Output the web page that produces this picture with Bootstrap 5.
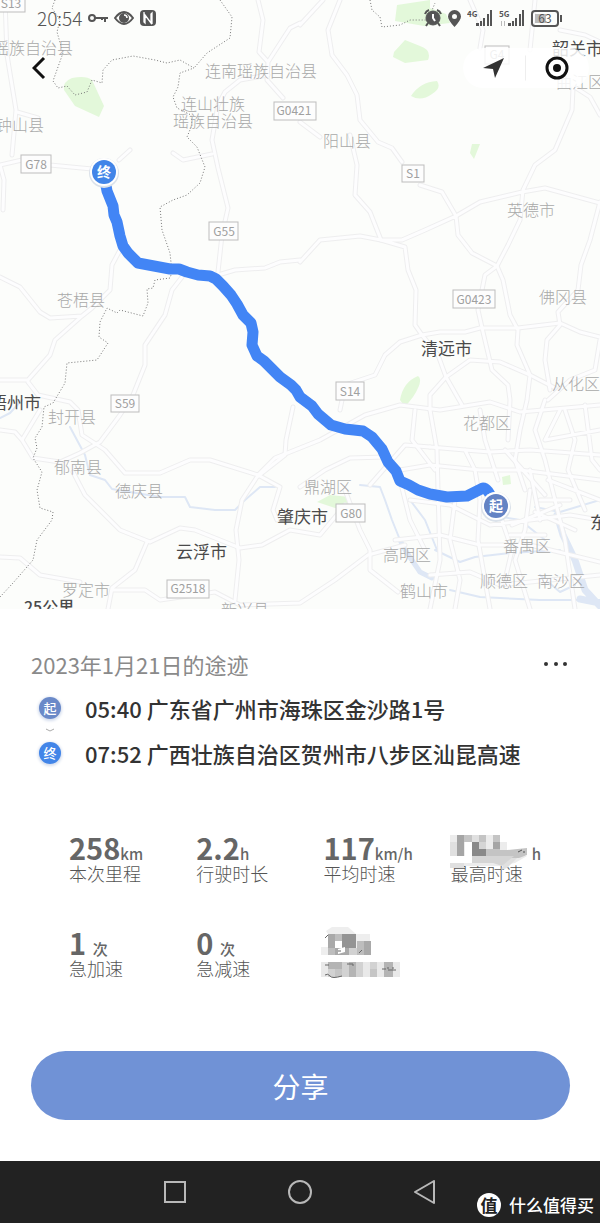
<!DOCTYPE html>
<html lang="zh-CN">
<head>
<meta charset="utf-8">
<meta name="viewport" content="width=device-width, initial-scale=1">
<title>途迹</title>
<link href="https://cdn.jsdelivr.net/npm/bootstrap@5.3.0/dist/css/bootstrap.min.css" rel="stylesheet">
<style>
  body { font-family: "Noto Sans CJK SC", "Noto Sans", sans-serif; color: #333; background: #fff; }
  svg { display: block; flex-shrink: 0; }
  .map-art { width: 100%; height: auto; background: #fcfdfb; }
  .minor { font-size: 16px; font-weight: 300; fill: #a9a9a9; }
  .major { font-size: 17px; font-weight: 400; fill: #4a4a4a; }
  .scale-label { font-size: 16px; font-weight: 500; }
  .shield rect { fill: #fdfdfd; stroke: #bdbdbd; }
  .shield text { font-size: 12px; fill: #a0a0a0; text-anchor: middle; }
  .pin-text { font-size: 14px; font-weight: 700; fill: #fff; text-anchor: middle; }
  .status-bar { padding: 5px 38px 0 37px; color: #555; }
  .status-icons { gap: 6px; }
  .clock { font-size: 19px; line-height: 26px; font-weight: 300; }
  .back-btn { margin: 10px 0 0 23px; }
  .capsule { margin: 17px 11px 0 0; width: 126px; height: 40px; background: rgba(255,255,255,.85); }
  .capsule .btn + .btn { border-left: 1px solid #eee; }
  .sheet { padding: 39px 30px 41px 31px; }
  .trip-title { font-size: 22px; line-height: 32px; color: #8a8a8a; }
  .place { font-size: 22px; line-height: 32px; font-weight: 500; }
  .dot { width: 22px; height: 22px; font-size: 13px; line-height: 22px; font-weight: 500; color: #fff; box-shadow: 0 1px 3px 1px #d3dced; }
  .dot-start { background: #6a89c8; }
  .dot-end { background: #4285e8; }
  .places { padding: 12px 0 0 8px; }
  .stats { padding: 65px 0 0 38px; margin-right: -8px; }
  .stats-grid { row-gap: 45px; }
  .figure-line { height: 28px; font-size: 29px; line-height: 26px; font-weight: 700; color: #666; }
  .unit { font-size: 15px; line-height: 15px; font-weight: 500; }
  .caption-text { font-size: 18px; line-height: 22px; font-weight: 300; color: #555; }
  .hidden-part { padding-left: 81px; }
  .mosaic { left: -10px; top: -4px; }
  .share-btn { height: 69px; margin-top: 72px; padding: 0; font-size: 28px; line-height: 32px; background: #7092d6; color: #fff; }
  .share-btn:hover { background: #6386cc; color: #fff; }
  .nav-keys { height: 62px; background: #222; }
  .nav-keys .btn { width: 125px; }
  .watermark { right: 6px; bottom: 4px; font-size: 17px; line-height: 28px; font-weight: 500; color: #fff; }
  .seal { width: 24px; height: 24px; line-height: 24px; background: #fff; color: #222; font-weight: 700; }
</style>
</head>
<body>
<header class="position-relative">
  <svg class="map-art" viewBox="0 0 600 609" role="img" aria-label="行程地图">
    <defs>
      <g id="roads" fill="none" stroke-linejoin="round" stroke-linecap="round">
        <path d="M5 0L7 55L16 110L12 155M17 112L38 118M0 165L22 160L50 165L92 169M119 160L130 150M0 165L4 180L3 210"/>
        <path d="M258 0L263 20L259 52L268 62L267 80L283 98M300 23L290 28L268 62M268 75L240 80L225 92L218 105L212 140L218 168L228 208L222 235L218 272M173 153L183 160L212 154"/>
        <path d="M340 0L328 30L332 55L347 75L357 95L360 120L378 142L392 148L402 162M323 0L300 25M300 122L320 137M350 135L357 165L355 195L370 212L381 240M420 185L442 192L456 216M470 0L483 30L480 48M535 0L530 50M560 30L585 35L600 42"/>
        <path d="M573 88L572 110L555 150L535 165L523 190L520 220L508 245L497 266M456 216L480 202L522 192L545 188L600 203M576 88L590 97L600 115"/>
        <path d="M300 262L320 240L360 236L381 240L402 240L425 230L456 216M381 240L405 247L408 270L416 290L415 325L422 335M456 216L458 235L472 253L497 266L503 280L510 315L518 330L517 345L530 375L527 400L520 430L515 460L525 490"/>
        <path d="M497 266L485 275L478 310L483 332L492 370L508 385L510 400L508 440M600 202L590 240L581 265L578 290L558 312L560 325L547 340L545 360L550 390"/>
        <path d="M340 410L345 385L375 375L385 355L400 342L422 335L440 332L465 332L480 328L518 328L560 323L580 332L600 337M422 335L438 355L446 377L462 405M446 377L430 395L430 410M446 377L470 360L500 362L530 375L555 388M600 340L595 370L570 380L548 400"/>
        <path d="M0 277L20 287L40 312L50 318L82 316L92 308L110 290L112 265L120 250M82 316L55 340L50 355L28 380L0 380M28 382L38 395L70 402L78 410L82 435L105 450L125 473L160 473L190 460L210 460L258 475L275 458L320 440L365 415L400 405L440 410L490 402L520 412L600 405"/>
        <path d="M182 277L172 290L165 315L145 345L145 365L133 395L120 415L100 442L80 453L60 462L33 458L22 440L15 432L0 430M22 440L40 410M218 275L235 270L265 268L280 262L300 260"/>
        <path d="M73 472L85 495L120 530L150 542L180 528L195 530L240 548L262 545L290 530L320 535L345 505M147 542L135 570L112 588L108 609M112 590L145 590L160 600L215 592L240 605L300 603L335 580L368 555L405 545M0 557L20 558L40 575L80 582"/>
        <path d="M293 407L286 440L285 455L257 477L242 500L236 530L239 560L235 600M258 475L280 487L273 510L277 520M300 487L325 470L350 458L385 457M400 470L430 465L480 470L520 470L560 475L600 480M345 490L360 530L370 550L370 570L398 592"/>
        <path d="M430 410L437 450L438 490L440 560L430 609M430 447L465 450L490 452L530 450L600 455M465 450L475 470L480 500L478 540L490 609M480 410L485 440L498 480M545 400L535 430L545 460L555 500L565 540L575 609"/>
        <path d="M395 540L440 535L480 545L530 545L600 562M410 500L450 505L490 525L530 520L570 515L600 520M530 490L525 530L515 560L530 609M565 410L575 440L568 470L585 510M500 515L512 550L505 580M585 405L592 460L600 470M430 575L470 572L500 585L550 580L600 575M455 500L450 540L460 580L455 609M415 410L412 440L435 470M548 480L600 500M505 450L545 495M560 410L545 440L600 430"/>
        <path d="M540 500L570 500M535 512L575 530M510 535L545 535M512 525L560 505M530 470L540 520M400 480L410 520L425 550M370 485L405 445L430 447"/>
      </g>
    </defs>
    <g fill="#e3f8da">
      <path d="M64 90Q62 82 72 78Q86 75 92 80L104 106L99 117L75 106Z"/>
      <path d="M397 5L430 0L430 8L446 14L450 23L424 26L395 21ZM394 52L405 40L420 46Q432 50 428 60L405 63L393 57ZM411 96Q420 82 437 81Q442 88 432 94Q421 102 411 96ZM472 144L480 144L474 159L470 153ZM400 400Q403 382 418 376Q424 380 413 397L405 407ZM317 502L330 495L350 497L350 507L335 508ZM502 477L510 475L511 484L503 485Z"/>
    </g>
    <g fill="none" stroke="#dee7f5" stroke-linejoin="round" stroke-linecap="round">
      <path stroke-width="2" d="M0 418L10 413L22 400M70 427L85 455L90 475L105 480L112 489L160 497L185 497L190 507L215 510L235 510L245 500L260 487L275 487M360 485L380 487L385 500L392 520L400 540M435 550L460 562L475 557L510 553L560 550M535 507L560 512L600 500M450 590L480 597L540 600L600 600M410 500L425 520L437 550M540 575L560 592L575 585M490 515L520 520L545 540"/>
      <path stroke-width="5" d="M400 540L405 550L420 572L432 578"/>
      <path stroke-width="7" d="M557 515L563 535L575 560L585 590L600 606M580 599L600 603"/>
    </g>
    <use href="#roads" stroke="#eeeeef" stroke-width="5"/>
    <use href="#roads" stroke="#fdfdfe" stroke-width="3"/>
    <g fill="none" stroke="#777" stroke-dasharray="1 2" stroke-linejoin="round">
      <path d="M55 0L52 8L60 20L57 32L63 53L53 81L58 88L67 86L75 95L87 92L92 80L102 83L103 70L112 60L133 56L155 60L167 63L180 60L194 68L180 73L178 87L173 97L177 108L191 115L192 125L187 137L197 147L205 167L200 183L187 195L173 200L160 207L162 230L170 253L172 272L170 278L155 280L153 288L147 289L148 303L143 316L120 310L117 313L107 308L100 322L99 337L108 343L97 360L67 363L65 383L53 403L44 407L42 427L35 438L37 448L33 458L42 472L37 490L40 508L53 512L52 520L37 540L33 560L13 583L0 597"/>
      <path d="M220 0L232 17L230 38L207 53L194 68M370 0L372 10L380 17L382 27L400 25L410 20L428 20L435 3"/>
    </g>
    <path d="M104 175L107 191L113 206L114 215L117 222L120 236L123 246L128 253L138 263L154 266L170 269L179 269L187 272L198 275L210 276L216 279L223 286L231 295L237 304L243 315L251 323L253 332L252 345L257 356L264 361L270 367L280 377L291 385L296 390L300 397L312 406L318 414L331 425L345 429L363 431L372 437L382 449L388 462L396 471L400 481L409 485L418 490L430 494L447 497L467 496L483 488Q489 488 494 505" fill="none" stroke="#4285f5" stroke-width="11" stroke-linejoin="round"/>
    <g class="minor">
      <text x="-7" y="54">瑶族自治县</text><text x="-4" y="131">钟山县</text>
      <text x="205" y="77">连南瑶族自治县</text><text x="181" y="110">连山壮族</text><text x="173" y="127">瑶族自治县</text>
      <text x="323" y="147">阳山县</text><text x="556" y="88">曲江区</text><text x="507" y="216">英德市</text>
      <text x="57" y="306">苍梧县</text><text x="539" y="303">佛冈县</text><text x="552" y="390">从化区</text>
      <text x="48" y="423">封开县</text><text x="463" y="429">花都区</text><text x="54" y="473">郁南县</text>
      <text x="115" y="497">德庆县</text><text x="304" y="493">鼎湖区</text><text x="503" y="552">番禺区</text>
      <text x="383" y="561">高明区</text><text x="400" y="597">鹤山市</text><text x="480" y="587">顺德区</text>
      <text x="537" y="587">南沙区</text><text x="62" y="596">罗定市</text><text x="221" y="616">新兴县</text>
    </g>
    <g class="major">
      <text x="552" y="55">韶关市</text><text x="421" y="355">清远市</text><text x="-10" y="409">梧州市</text>
      <text x="277" y="523">肇庆市</text><text x="176" y="558">云浮市</text><text x="590" y="529">东莞市</text>
      <text class="scale-label" x="24" y="613">25公里</text>
    </g>
    <g class="shield">
      <rect x="-5" y="-7" width="30" height="19"/><text x="11" y="8">S13</text>
      <rect x="21" y="155" width="30" height="18"/><text x="36" y="169">G78</text>
      <rect x="274" y="102" width="42" height="18"/><text x="294" y="115">G0421</text>
      <rect x="402" y="165" width="22" height="17"/><text x="413" y="178">S1</text>
      <rect x="485" y="46" width="24" height="18"/><text x="497" y="59">G4</text>
      <rect x="209" y="222" width="29" height="18"/><text x="224" y="236">G55</text>
      <rect x="453" y="290" width="42" height="18"/><text x="474" y="304">G0423</text>
      <rect x="336" y="382" width="28" height="18"/><text x="350" y="396">S14</text>
      <rect x="111" y="395" width="28" height="17"/><text x="125" y="408">S59</text>
      <rect x="336" y="504" width="29" height="18"/><text x="351" y="518">G80</text>
      <rect x="167" y="580" width="42" height="18"/><text x="188" y="593">G2518</text>
    </g>
    <circle cx="104" cy="173" r="15" fill="#dbe2ea"/><circle cx="104" cy="172" r="14" fill="#fff"/><circle cx="104" cy="172" r="12" fill="#4285e8"/>
    <text class="pin-text" x="104" y="177">终</text>
    <circle cx="496" cy="507" r="15" fill="#dbe2ea"/><circle cx="496" cy="506" r="14" fill="#fff"/><circle cx="496" cy="506" r="12" fill="#6483c4"/>
    <text class="pin-text" x="496" y="511">起</text>
  </svg>

  <div class="position-absolute top-0 start-0 w-100">
    <div class="status-bar d-flex align-items-center justify-content-between">
      <div class="d-flex align-items-center status-icons">
        <span class="clock">20:54</span>
        <svg width="20" height="16" viewBox="0 0 20 16" fill="none" stroke="#555" stroke-width="2"><circle cx="4" cy="8" r="3"/><path d="M7 8H20M17 8V12M14 8V10"/></svg>
        <svg width="20" height="16" viewBox="0 0 20 16"><path d="M1 8Q10 -4 19 8Q10 20 1 8Z" fill="none" stroke="#555" stroke-width="2"/><circle cx="10" cy="8" r="5" fill="#555"/><path d="M10 5A3 3 0 0 1 13 8" fill="none" stroke="#fff" stroke-width="1.5"/></svg>
        <svg width="16" height="16" viewBox="0 0 16 16"><rect width="16" height="16" rx="4" fill="#555"/><path d="M4 2V12L5 13V5L11 13V4L12 3V14" fill="none" stroke="#fff" stroke-width="1.3"/></svg>
      </div>
      <div class="d-flex align-items-center status-icons">
        <svg width="18" height="18" viewBox="0 0 18 18" fill="none" stroke="#555"><circle cx="9" cy="9" r="7" fill="#555"/><path d="M1 5Q2 2 5 1M13 1Q16 2 17 5M4 14L2 17M14 14L16 17" stroke-width="2"/><path d="M9 5V9L11 12" stroke="#fff" stroke-width="2"/></svg>
        <svg width="13" height="17" viewBox="0 0 13 17"><path fill="#555" fill-rule="evenodd" d="M6.500 0A6.500 6.500 0 0 0 0 6.500Q0 10 6.500 17Q13 10 13 6.500A6.500 6.500 0 0 0 6.500 0ZM6.500 4A2.500 2.500 0 1 1 6.500 9A2.500 2.500 0 1 1 6.500 4Z"/></svg>
        <svg width="26" height="18" viewBox="0 0 26 18" fill="#555"><text x="0" y="8" font-size="8" font-weight="700">4G</text><path d="M9 14h3v3h-3zM13 12h2v5h-2zM16 9h2v8h-2zM20 5h2v12h-2zM23 1h2v16h-2z"/></svg>
        <svg width="26" height="18" viewBox="0 0 26 18" fill="#555"><text x="0" y="8" font-size="8" font-weight="700">5G</text><path fill="#bbb" d="M2 12h1v5h-1zM5 12h1v5h-1z"/><path d="M9 14h3v3h-3zM13 12h2v5h-2zM16 9h2v8h-2zM20 5h2v12h-2zM23 1h2v16h-2z"/></svg>
        <svg width="31" height="17" viewBox="0 0 31 17"><rect x="1" y="1" width="26" height="15" rx="3" fill="none" stroke="#555" stroke-width="2"/><rect x="4" y="4" width="11" height="9" fill="#bbb"/><path d="M30 5V12" stroke="#555" stroke-width="2"/><text x="14" y="13" font-size="12" text-anchor="middle" fill="#555">63</text></svg>
      </div>
    </div>
    <div class="d-flex justify-content-between align-items-start">
      <button type="button" class="btn p-1 back-btn" aria-label="返回"><svg class="ms-1" width="16" height="42" viewBox="0 0 16 42" fill="none" stroke="#111" stroke-width="3"><path d="M12 12L2 22L12 32"/></svg></button>
      <div class="capsule rounded-pill d-flex align-items-center">
        <button type="button" class="btn p-0 flex-fill d-flex justify-content-center rounded-0" aria-label="定位"><svg width="22" height="22" viewBox="0 0 22 22"><path d="M21 1L12 21L10 12L0 11Z" fill="#333"/></svg></button>
        <button type="button" class="btn p-0 flex-fill d-flex justify-content-center rounded-0" aria-label="关闭"><svg width="24" height="24" viewBox="0 0 24 24"><circle cx="12" cy="12" r="10" fill="#fff" stroke="#111" stroke-width="3"/><circle cx="12" cy="12" r="4" fill="#111"/></svg></button>
      </div>
    </div>
  </div>
</header>

<main class="sheet">
  <div class="d-flex justify-content-between align-items-center">
    <h1 class="trip-title fw-normal m-0">2023年1月21日的途迹</h1>
    <button type="button" class="btn p-0 border-0" aria-label="更多"><svg width="28" height="6" viewBox="0 0 28 6" fill="#333"><circle cx="4" cy="3" r="2"/><circle cx="14" cy="3" r="2"/><circle cx="23" cy="3" r="2"/></svg></button>
  </div>
  <div class="places">
    <div class="d-flex align-items-center">
      <span class="dot dot-start rounded-circle text-center me-4">起</span><span class="place">05:40 广东省广州市海珠区金沙路1号</span>
    </div>
    <svg class="ms-1 my-1" width="14" height="5" viewBox="0 0 14 5" fill="none" stroke="#aaa"><path d="M3 1L7 3L11 1"/></svg>
    <div class="d-flex align-items-center">
      <span class="dot dot-end rounded-circle text-center me-4">终</span><span class="place">07:52 广西壮族自治区贺州市八步区汕昆高速</span>
    </div>
  </div>

  <div class="stats">
    <div class="row row-cols-4 g-0 stats-grid">
      <div class="col"><div class="figure-line">258<span class="unit">km</span></div><div class="caption-text">本次里程</div></div>
      <div class="col"><div class="figure-line">2.2<span class="unit">h</span></div><div class="caption-text">行驶时长</div></div>
      <div class="col"><div class="figure-line">117<span class="unit">km/h</span></div><div class="caption-text">平均时速</div></div>
      <div class="col position-relative">
        <div class="figure-line hidden-part"><span class="unit">h</span></div><div class="caption-text">最高时速</div>
        <svg class="mosaic position-absolute" width="100" height="60" viewBox="0 0 100 60">
          <path fill="#ececec" d="M9 5h43v7h14v14h20l-12 7-16 3H9z"/>
          <path fill="#fff" d="M9 26h28v7H9zM24 12h7v14h-7z"/>
          <path fill="#e0e0e0" d="M9 12h7v14H9zM24 5h21v7H24zM9 33h14v5H9zM66 26l14-2-14 14-6 2z"/>
          <path fill="#a5a5a5" d="M16 5h7v21h-7zM52 12h7v7h-7z"/>
          <path fill="#c4c4c4" d="M23 5h8v7h-8zM38 5h7v7h-7zM52 5h7v7h-7zM45 19h14v7H45zM66 20l20-2v7l-8 3H59v-8z"/>
          <path fill="#898989" d="M31 12h7v14h-7zM38 19h7v7h-7z"/>
          <path fill="#d5d5d5" d="M38 12h7v7h-7zM31 26h28v7H31zM59 26h14l-12 10-9-3z"/>
          <path d="M77 22l4-2M82 22h2" stroke="#555" stroke-width="1"/>
        </svg>
      </div>
      <div class="col"><div class="figure-line">1 <span class="unit">次</span></div><div class="caption-text">急加速</div></div>
      <div class="col"><div class="figure-line">0 <span class="unit">次</span></div><div class="caption-text">急减速</div></div>
      <div class="col position-relative">
        <svg class="mosaic position-absolute" width="100" height="60" viewBox="0 0 100 60" role="img" aria-label="已遮挡">
          <path fill="#eee" d="M12 6l6-4h16l8 7h14v21H7v-8h7V9z"/>
          <path fill="#a9a9a9" d="M14 9h21v21H21v-7h-7zM50 16h7v14h-7z"/>
          <path fill="#bdbdbd" d="M21 9h7v7h-7zM14 23h7v7h-7zM43 16h7v14h-7z"/>
          <path fill="#949494" d="M28 9h14v14H28z"/>
          <path fill="#fff" d="M21 16h7v7h-7zM24 24l7-2v5l-7 2z"/>
          <path fill="#d2d2d2" d="M7 37h56v15H7zM35 23h8v7h-8z"/>
          <path fill="#b4b4b4" d="M14 37h14v7H14zM35 37h7v15h-7zM70 37h9v15h-9z"/>
          <path fill="#e9e9e9" d="M7 37h7v15H7zM49 37h7v15h-7zM63 37h7v15h-7zM79 37h7v15h-7z"/>
          <path fill="#c5c5c5" d="M21 44h7v8h-7zM56 44h7v8h-7z"/>
          <path fill="none" stroke="#666" d="M11 40h4M11 50q3-2 5 1t12 0M33 39h6v2M68 44h4M74 44v-2M74 45h8M79 44v-2M24 26h3M45 28l3-3M11 13l3-3"/>
        </svg>
      </div>
    </div>
  </div>

  <button type="button" class="btn share-btn rounded-pill w-100 border-0">分享</button>
</main>

<footer class="position-relative">
  <nav class="nav-keys d-flex justify-content-center">
    <button type="button" class="btn border-0 p-0 d-flex align-items-center justify-content-center" aria-label="最近任务"><svg width="24" height="24" viewBox="0 0 24 24" fill="none" stroke="#b8b8b8" stroke-width="2"><rect x="2" y="2" width="20" height="20"/></svg></button>
    <button type="button" class="btn border-0 p-0 d-flex align-items-center justify-content-center" aria-label="主页"><svg width="24" height="24" viewBox="0 0 24 24" fill="none" stroke="#b8b8b8" stroke-width="2"><circle cx="12" cy="12" r="11"/></svg></button>
    <button type="button" class="btn border-0 p-0 d-flex align-items-center justify-content-center" aria-label="返回上页"><svg width="24" height="24" viewBox="0 0 24 24" fill="none" stroke="#b8b8b8" stroke-width="2" stroke-linejoin="round"><path d="M21 1V23L2 12Z"/></svg></button>
  </nav>
  <div class="watermark position-absolute d-flex align-items-center gap-2"><span class="seal rounded-circle text-center">值</span><span>什么值得买</span></div>
</footer>
<script src="https://cdn.jsdelivr.net/npm/bootstrap@5.3.0/dist/js/bootstrap.bundle.min.js"></script>
</body>
</html>
